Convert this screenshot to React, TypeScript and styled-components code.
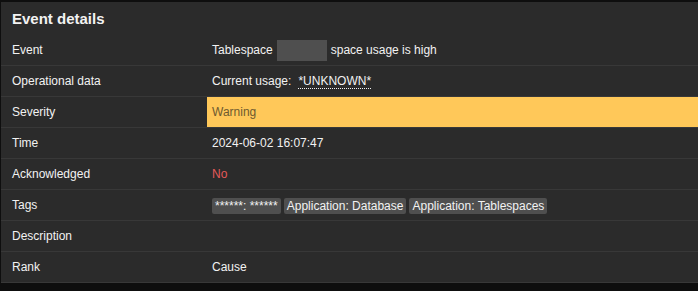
import React from "react";
import styled, { createGlobalStyle } from "styled-components";

const Global = createGlobalStyle`
  html, body { margin: 0; padding: 0; background: #0e0e0e; }
  body { padding: 2px 0 0 1px; font-family: "Liberation Sans", Arial, sans-serif; }
`;

const Card = styled.section`
  background: #2b2b2b;
  color: #f2f2f2;
  font-size: 12px;
`;

const Header = styled.h4`
  margin: 0;
  height: 33px;
  display: flex;
  align-items: center;
  padding: 0 11px;
  font-size: 15px;
  font-weight: bold;
  box-sizing: border-box;
  padding-bottom: 1px;
`;

const Row = styled.div`
  display: grid;
  grid-template-columns: 206px 1fr;
  height: 31px;
  box-sizing: border-box;
  border-bottom: 1px solid #383838;
`;

const Label = styled.div`
  display: flex;
  align-items: center;
  padding-left: 11px;
`;

const Value = styled.div<{ $tone?: "warning" | "bad" }>`
  display: flex;
  align-items: center;
  gap: 3px;
  padding-left: 5px;
  background: ${(p) => (p.$tone === "warning" ? "#ffc859" : "transparent")};
  color: ${(p) =>
    p.$tone === "warning" ? "#6e5a30" : p.$tone === "bad" ? "#e45959" : "#f2f2f2"};
`;

const Redacted = styled.span`
  display: inline-block;
  width: 50px;
  height: 21px;
  background: #4f4f4f;
  margin: 0 1px 0 1px;
`;

const Hint = styled.span`
  border-bottom: 1px dotted #f2f2f2;
  margin-left: 4px;
  line-height: 14px;
`;

const Tag = styled.span`
  display: inline-flex;
  align-items: center;
  height: 16px;
  padding: 0 3px;
  background: #4f4f4f;
  border-radius: 2px;
  color: #f2f2f2;
  margin-top: 1px;
`;

export default function App() {
  return (
    <>
      <Global />
      <Card>
        <Header>Event details</Header>
        <Row>
          <Label>Event</Label>
          <Value>
            Tablespace <Redacted /> space usage is high
          </Value>
        </Row>
        <Row>
          <Label>Operational data</Label>
          <Value>
            Current usage: <Hint>*UNKNOWN*</Hint>
          </Value>
        </Row>
        <Row>
          <Label>Severity</Label>
          <Value $tone="warning">Warning</Value>
        </Row>
        <Row>
          <Label>Time</Label>
          <Value>2024-06-02 16:07:47</Value>
        </Row>
        <Row>
          <Label>Acknowledged</Label>
          <Value $tone="bad">No</Value>
        </Row>
        <Row>
          <Label>Tags</Label>
          <Value>
            <Tag>******: ******</Tag>
            <Tag>Application: Database</Tag>
            <Tag>Application: Tablespaces</Tag>
          </Value>
        </Row>
        <Row>
          <Label>Description</Label>
          <Value />
        </Row>
        <Row>
          <Label>Rank</Label>
          <Value>Cause</Value>
        </Row>
      </Card>
    </>
  );
}
